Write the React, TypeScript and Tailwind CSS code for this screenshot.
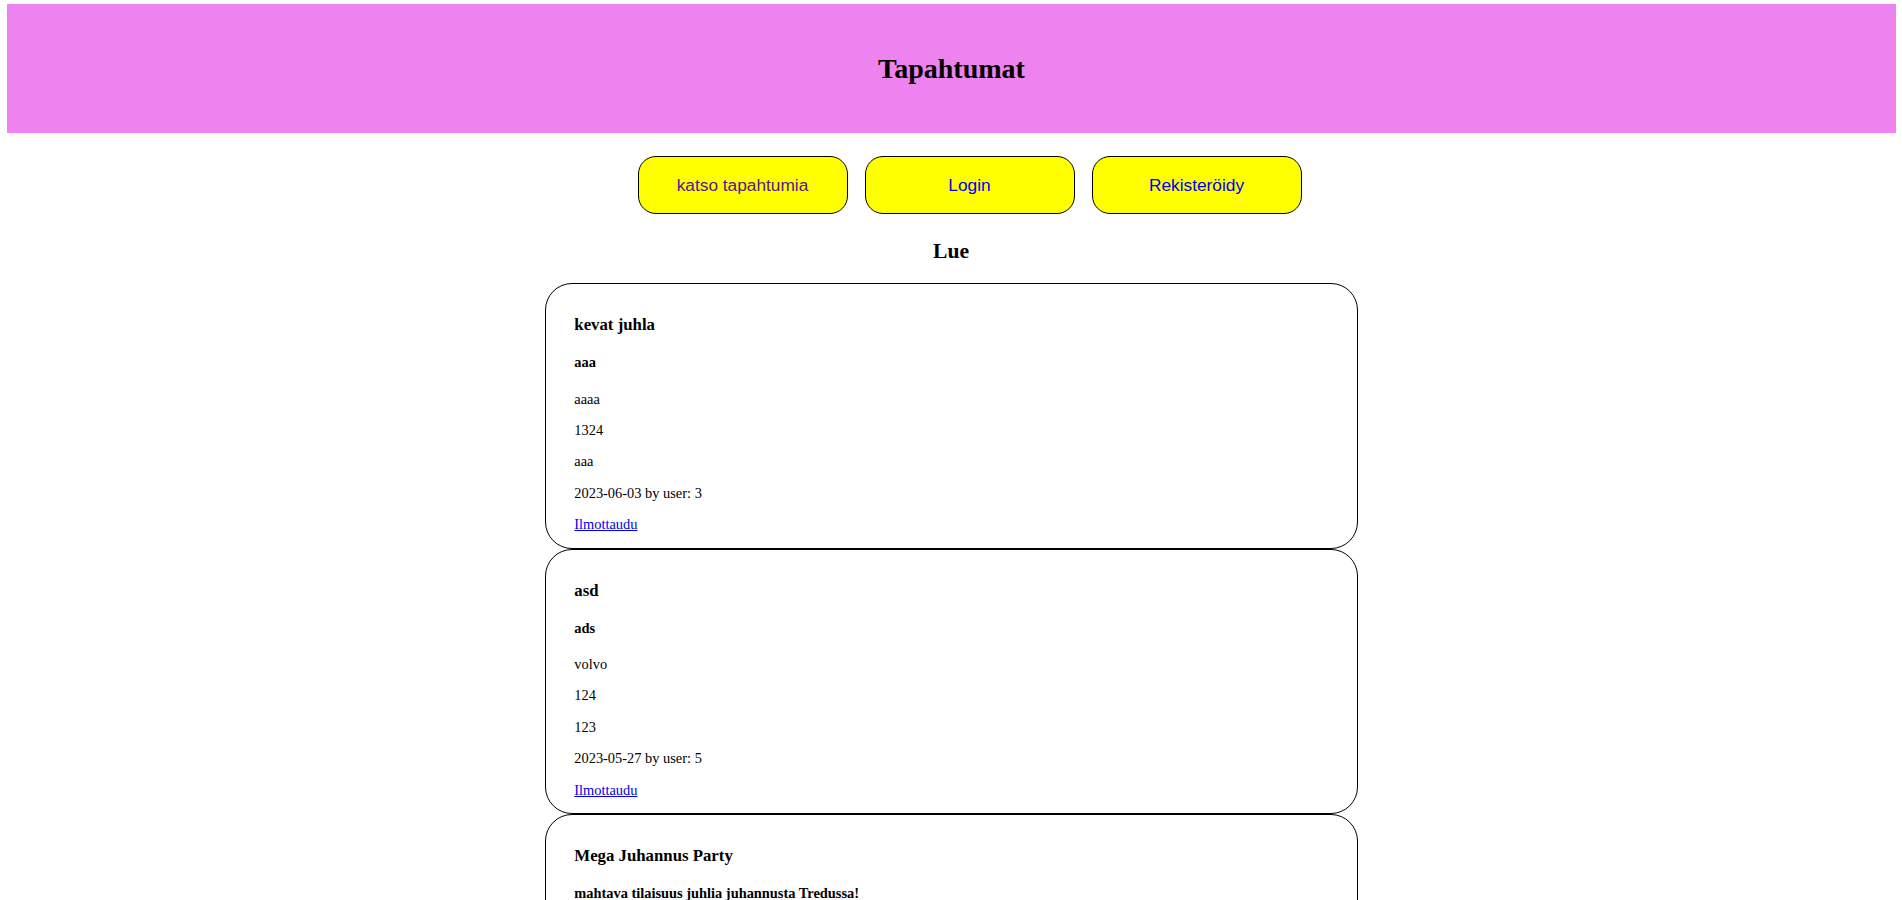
type Event = {
  title: string;
  subtitle: string;
  lines: string[];
  date: string;
  user: number;
};

const events: Event[] = [
  { title: "kevat juhla", subtitle: "aaa", lines: ["aaaa", "1324", "aaa"], date: "2023-06-03", user: 3 },
  { title: "asd", subtitle: "ads", lines: ["volvo", "124", "123"], date: "2023-05-27", user: 5 },
  {
    title: "Mega Juhannus Party",
    subtitle: "mahtava tilaisuus juhlia juhannusta Tredussa!",
    lines: ["Tredu", "50", "Hepolamminkatu 10"],
    date: "2023-06-23",
    user: 2,
  },
];

function NavButton({ label, visited }: { label: string; visited?: boolean }) {
  return (
    <a
      href="#"
      className={`flex h-[58px] w-[210px] items-center justify-center rounded-[18px] border border-black bg-[#ffff00] font-['Liberation_Sans',Arial,sans-serif] text-[17.3px] ${
        visited ? "text-[#551a8b]" : "text-[#0000ee]"
      }`}
    >
      {label}
    </a>
  );
}

function EventCard({ event }: { event: Event }) {
  return (
    <div className="rounded-[27px] border border-black px-[28.8px] py-[14.4px]">
      <h3 className="my-[16.8px] text-[16.8px] font-bold">{event.title}</h3>
      <h4 className="my-[19.2px] text-[14.4px] font-bold">{event.subtitle}</h4>
      {event.lines.map((line, i) => (
        <p key={i} className="my-[14.4px]">
          {line}
        </p>
      ))}
      <p className="my-[14.4px]">
        {event.date} by user: {event.user}
      </p>
      <div>
        <a href="#" className="text-[#0000ee] underline">
          Ilmottaudu
        </a>
      </div>
    </div>
  );
}

export default function App() {
  return (
    <div className="min-h-screen bg-white pb-[8px] font-['Liberation_Serif','Times_New_Roman',serif] text-[14.4px] leading-[normal] text-black">
      <header className="ml-[7px] mr-[6px] mt-[4px] flex h-[129px] items-center justify-center bg-[#ee82ee]">
        <h1 className="text-[28px] font-bold">Tapahtumat</h1>
      </header>

      <nav className="mt-[23px] flex justify-center gap-[17px] pl-[37px]">
        <NavButton label="katso tapahtumia" visited />
        <NavButton label="Login" />
        <NavButton label="Rekisteröidy" />
      </nav>

      <h2 className="mb-[19px] mt-[25px] text-center text-[21.6px] font-bold">Lue</h2>

      <div className="mx-auto w-[813px]">
        {events.map((event, i) => (
          <EventCard key={i} event={event} />
        ))}
      </div>
    </div>
  );
}
